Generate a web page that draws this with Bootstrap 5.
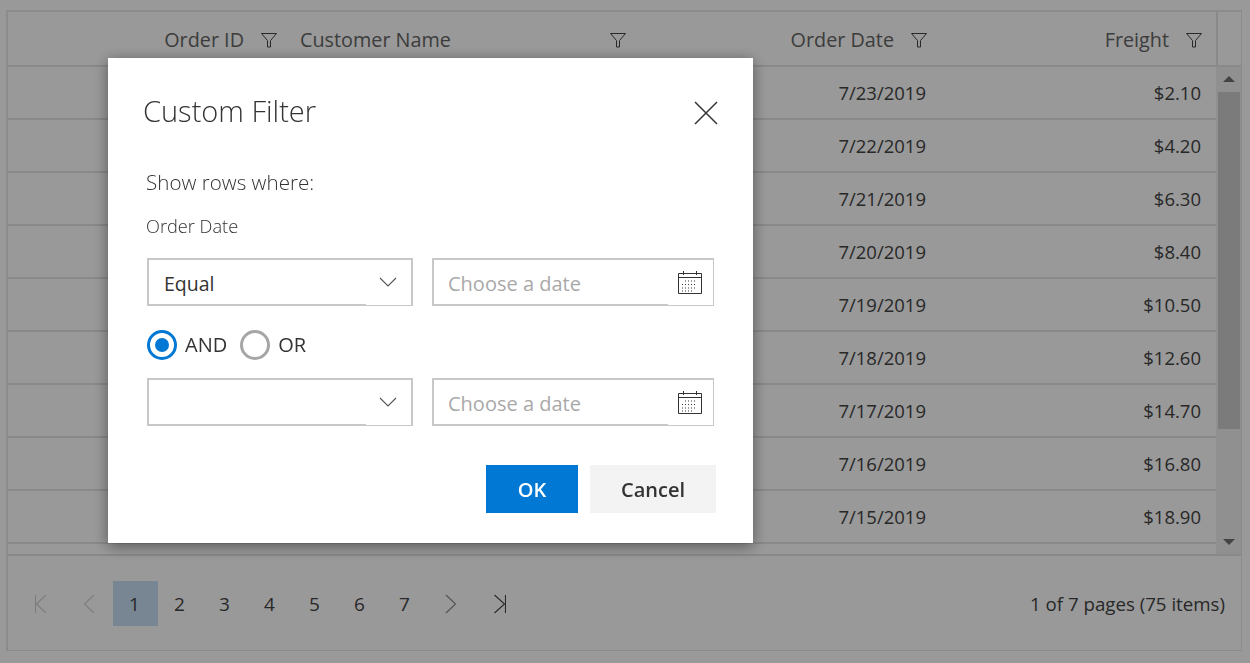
<!DOCTYPE html>
<html lang="en">
<head>
<meta charset="utf-8">
<title>Custom Filter</title>
<link rel="stylesheet" href="https://cdn.jsdelivr.net/npm/bootstrap@5.3.0/dist/css/bootstrap.min.css">
<style>
html,body{height:663px;overflow:hidden}
body{background:#fff;color:#444;font-family:"Open Sans","Noto Sans","Liberation Sans",sans-serif;font-size:18.5px;padding:10px 8px 11px 6px}
.grid-shell{height:641px;border:2px solid #e8e8e8;border-right-width:1px;border-bottom-width:1px;display:flex;flex-direction:column}
.grid-head{display:flex;height:55px;border-bottom:2px solid #e4e4e4;flex:none}
.hcell,.dcell{display:flex;align-items:center;justify-content:flex-end;flex:none}
.c1{width:276px}.c2{width:350px}.c3{width:307px}.c4{width:275px}
.hcell{color:#666;font-size:19.800px;gap:17px;padding-right:14px;padding-top:3px}
.hcell.c1{padding-right:7px}
.hcell.c2{justify-content:space-between;padding-left:16px;padding-right:8px}
.funnel{width:16px;height:16px;stroke:#444;fill:none;stroke-width:1;flex:none}
.hgap{flex:1;border-left:2px solid #e4e4e4}
.grid-body{display:flex;height:489px;border-bottom:2px solid #e4e4e4;flex:none}
.grows{width:1208px;flex:none}
.grow-line{display:flex;height:53px;border-bottom:2px solid #e4e4e4}
.dcell{padding-right:15px}
.vbar{flex:1;background:#f0f0f0;display:flex;flex-direction:column;align-items:center;justify-content:space-between;padding:9px 0 9px}
.vtrack{flex:1;width:22px;margin:10px 0 0}
.vthumb{height:337px;background:#cdcdcd}
.arrow{width:0;height:0;border-left:6px solid transparent;border-right:6px solid transparent}
.arrow-up{border-bottom:6px solid #707070}
.arrow-down{border-top:6px solid #707070}
.pager{flex:1;display:flex;align-items:center;justify-content:space-between;padding:1px 16px 0 10px}
.pager-info{padding-top:1px;font-size:18.700px}
.pager .pagination{--bs-pagination-bg:transparent;--bs-pagination-border-width:0;--bs-pagination-border-radius:0;--bs-pagination-color:#444;--bs-pagination-padding-x:0;--bs-pagination-padding-y:0;--bs-pagination-font-size:19px;--bs-pagination-active-bg:#c7e0f4;--bs-pagination-active-color:#444;--bs-pagination-disabled-bg:transparent;margin:0}
.pager .page-link{width:45px;height:45px;display:flex;align-items:center;justify-content:center;border-radius:0!important;margin-left:0!important;padding:1px 2px 0 0}
.pager .page-gap{margin-right:5px}
.pager .page-gap-left{margin-left:4px}
.nav-ico{width:12px;height:20px;fill:none;stroke-width:1.1}
.nav-off{stroke:#cfcfcf}
.nav-on{stroke:#8a8a8a}
.nav-last{stroke:#444}
.first-ico,.next-ico,.last-ico{margin-left:2px}
.prev-ico{margin-right:1px}
.dlg.modal{display:block}
.dlg .modal-dialog{max-width:none;width:645px;margin:58px 0 0 108px}
.dlg .modal-content{height:485px;border:0;border-radius:0;box-shadow:0 3px 14px rgba(0,0,0,.45);padding:0 37px 30px 35px;color:#333}
.dlg-title{font-size:29px;font-weight:300;line-height:40px;margin:0}
.dlg-head{display:flex;justify-content:space-between;align-items:center;padding-top:33px}
.x-btn{background:none;border:0;padding:0;width:24px;height:24px;display:flex;margin-top:4px;margin-right:-2px}
.dlg-body{padding:0 0 0 3px;flex:1;display:flex;flex-direction:column}
.lbl-big{font-size:20.600px;font-weight:300;line-height:28px;margin-top:37px}
.lbl-small{font-size:18.200px;font-weight:300;line-height:24px;margin-top:18px;margin-bottom:20px}
.frow{display:flex;gap:19px;margin-left:1px;width:567px}
.fbox{height:48px;position:relative;background:#fff;display:flex;align-items:center;border:solid #c8c8c8;font-size:19.500px}
.fsel{width:266px;border-width:2px 2px 1px 2px;padding-left:15px;padding-top:3px}
.fdate{width:282px;border-width:2px 1px 1px 2px;padding-left:14px;padding-top:3px;color:#a9a9a9;font-size:20px}
.under{position:absolute;left:-2px;bottom:-1px;height:2px;background:#c8c8c8}
.fsel .under{width:219px}
.fdate .under{width:236px}
.chev{position:absolute;right:14px;top:17px;width:18px;height:11px;stroke:#555;fill:none;stroke-width:1.1}
.cal{position:absolute;right:11px;top:10px;width:24px;height:24px}
.radios{display:flex;align-items:center;height:30px;margin:24px 0 18px 1px;font-size:20px}
.rd{width:30px;height:30px;border-radius:50%;border:3px solid #a6a6a6;flex:none;display:flex;align-items:center;justify-content:center;margin-right:8px}
.rd-on{border-color:#0078d4}
.rd-on::after{content:"";width:14px;height:14px;border-radius:50%;background:#0078d4}
.rd-text{margin-right:13px;line-height:30px}
.dlg-foot{display:flex;justify-content:flex-end;gap:12px;margin-top:39px}
.btn-ok,.btn-cancel{height:48px;border:0;border-radius:0;font-size:20px;font-weight:600;padding:2px 0 0}
.btn-ok{width:92px;background:#0078d4;color:#fff}
.btn-cancel{width:126px;background:#f3f3f3;color:#333}
.modal-backdrop.dim{opacity:.4}
</style>
</head>
<body>
<div class="grid-shell">
  <div class="grid-head">
    <div class="hcell c1"><span>Order ID</span><svg class="funnel" viewBox="0 0 16 16"><path d="M.5 1.500h15L9.500 8.500v6.500h-3V8.500z"/></svg></div>
    <div class="hcell c2"><span>Customer Name</span><svg class="funnel" viewBox="0 0 16 16"><path d="M.5 1.500h15L9.500 8.500v6.500h-3V8.500z"/></svg></div>
    <div class="hcell c3"><span>Order Date</span><svg class="funnel" viewBox="0 0 16 16"><path d="M.5 1.500h15L9.500 8.500v6.500h-3V8.500z"/></svg></div>
    <div class="hcell c4"><span>Freight</span><svg class="funnel" viewBox="0 0 16 16"><path d="M.5 1.500h15L9.500 8.500v6.500h-3V8.500z"/></svg></div>
    <div class="hgap"></div>
  </div>
  <div class="grid-body">
    <div class="grows">
      <div class="grow-line"><div class="dcell c1"></div><div class="dcell c2"></div><div class="dcell c3">7/23/2019</div><div class="dcell c4">$2.10</div></div>
      <div class="grow-line"><div class="dcell c1"></div><div class="dcell c2"></div><div class="dcell c3">7/22/2019</div><div class="dcell c4">$4.20</div></div>
      <div class="grow-line"><div class="dcell c1"></div><div class="dcell c2"></div><div class="dcell c3">7/21/2019</div><div class="dcell c4">$6.30</div></div>
      <div class="grow-line"><div class="dcell c1"></div><div class="dcell c2"></div><div class="dcell c3">7/20/2019</div><div class="dcell c4">$8.40</div></div>
      <div class="grow-line"><div class="dcell c1"></div><div class="dcell c2"></div><div class="dcell c3">7/19/2019</div><div class="dcell c4">$10.50</div></div>
      <div class="grow-line"><div class="dcell c1"></div><div class="dcell c2"></div><div class="dcell c3">7/18/2019</div><div class="dcell c4">$12.60</div></div>
      <div class="grow-line"><div class="dcell c1"></div><div class="dcell c2"></div><div class="dcell c3">7/17/2019</div><div class="dcell c4">$14.70</div></div>
      <div class="grow-line"><div class="dcell c1"></div><div class="dcell c2"></div><div class="dcell c3">7/16/2019</div><div class="dcell c4">$16.80</div></div>
      <div class="grow-line"><div class="dcell c1"></div><div class="dcell c2"></div><div class="dcell c3">7/15/2019</div><div class="dcell c4">$18.90</div></div>
    </div>
    <div class="vbar">
      <span class="arrow arrow-up"></span>
      <div class="vtrack"><div class="vthumb"></div></div>
      <span class="arrow arrow-down"></span>
    </div>
  </div>
  <nav class="pager">
    <ul class="pagination">
      <li class="page-item disabled page-gap"><a class="page-link" aria-label="First"><svg class="nav-ico nav-off first-ico" viewBox="0 0 12 20"><path d="M.5 1v18M11 1 1.500 10 11 19"/></svg></a></li>
      <li class="page-item disabled"><a class="page-link" aria-label="Previous"><svg class="nav-ico nav-off prev-ico" viewBox="0 0 12 20"><path d="M11 1 1.500 10 11 19"/></svg></a></li>
      <li class="page-item active"><a class="page-link" href="#">1</a></li>
      <li class="page-item"><a class="page-link" href="#">2</a></li>
      <li class="page-item"><a class="page-link" href="#">3</a></li>
      <li class="page-item"><a class="page-link" href="#">4</a></li>
      <li class="page-item"><a class="page-link" href="#">5</a></li>
      <li class="page-item"><a class="page-link" href="#">6</a></li>
      <li class="page-item"><a class="page-link" href="#">7</a></li>
      <li class="page-item"><a class="page-link" href="#" aria-label="Next"><svg class="nav-ico nav-on next-ico" viewBox="0 0 12 20"><path d="M1 1l9.500 9L1 19"/></svg></a></li>
      <li class="page-item page-gap-left"><a class="page-link" href="#" aria-label="Last"><svg class="nav-ico nav-last last-ico" viewBox="0 0 12 20"><path d="M.5 1l10 9-10 9M11.500 1v18"/></svg></a></li>
    </ul>
    <span class="pager-info">1 of 7 pages (75 items)</span>
  </nav>
</div>

<div class="modal-backdrop dim"></div>
<div class="modal dlg" tabindex="-1">
  <div class="modal-dialog">
    <div class="modal-content">
      <div class="dlg-head">
        <h5 class="dlg-title">Custom Filter</h5>
        <button class="x-btn" aria-label="Close"><svg width="24" height="24" viewBox="0 0 24 24" fill="none" stroke="#333" stroke-width="1.5"><path d="M1 1l22 22M23 1 1 23"/></svg></button>
      </div>
      <div class="dlg-body">
        <div class="lbl-big">Show rows where:</div>
        <div class="lbl-small">Order Date</div>
        <div class="frow">
          <div class="fbox fsel">Equal<span class="under"></span><svg class="chev" viewBox="0 0 18 11"><path d="M1 1l8 8 8-8"/></svg></div>
          <div class="fbox fdate">Choose a date<span class="under"></span><svg class="cal" viewBox="0 0 24 24" fill="none" stroke="#333"><path d="M.5 3.500h23v20H.5zM.5 7.500h23"/><path d="M5.500 1v4M18.500 1v4"/><path stroke-dasharray="1 2" d="M7 11h12M4 14.500h15M4 18h15M4 21h12"/></svg></div>
        </div>
        <div class="radios">
          <span class="rd rd-on"></span><span class="rd-text">AND</span>
          <span class="rd"></span><span class="rd-text">OR</span>
        </div>
        <div class="frow">
          <div class="fbox fsel"><span class="under"></span><svg class="chev" viewBox="0 0 18 11"><path d="M1 1l8 8 8-8"/></svg></div>
          <div class="fbox fdate">Choose a date<span class="under"></span><svg class="cal" viewBox="0 0 24 24" fill="none" stroke="#333"><path d="M.5 3.500h23v20H.5zM.5 7.500h23"/><path d="M5.500 1v4M18.500 1v4"/><path stroke-dasharray="1 2" d="M7 11h12M4 14.500h15M4 18h15M4 21h12"/></svg></div>
        </div>
        <div class="dlg-foot">
          <button class="btn btn-ok">OK</button>
          <button class="btn btn-cancel">Cancel</button>
        </div>
      </div>
    </div>
  </div>
</div>
<script src="https://cdn.jsdelivr.net/npm/bootstrap@5.3.0/dist/js/bootstrap.bundle.min.js"></script>
</body>
</html>
